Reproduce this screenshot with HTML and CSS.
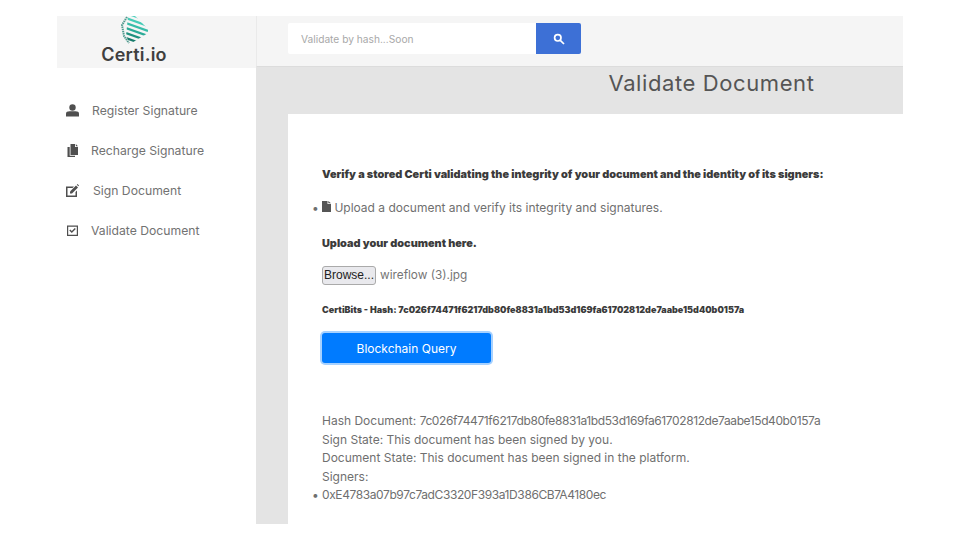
FILE: index.html
```html
<!DOCTYPE html>
<html lang="en">
<head>
<meta charset="UTF-8">
<title>Certi.io</title>
<link rel="stylesheet" href="styles.css">
</head>
<body>
<div class="app">
  <aside class="sidebar">
    <div class="brand">
      <svg class="brand-mark" width="28" height="29" viewBox="0 0 28 29">
        <defs><clipPath id="cube"><path d="M7 0H14L27 13V17L9 28 5 20z"/></clipPath></defs>
        <g clip-path="url(#cube)" fill="none" stroke-width="2.300">
          <path d="M5 -3L27 5" stroke="#52d2bf"/>
          <path d="M5 2L27 10" stroke="#45cbb7"/>
          <path d="M5 7L27 15" stroke="#37bca8"/>
          <path d="M5 12L27 20" stroke="#2baa97"/>
          <path d="M5 17L27 25" stroke="#20917f"/>
          <path d="M5 22L27 30" stroke="#187b6c"/>
        </g>
        <path d="M6 1L1 9 3 20 8 27" fill="none" stroke="#4f9a8e" stroke-width="2" stroke-dasharray="1.500 .7"/>
      </svg>
      <div class="brand-name">Certi.io</div>
    </div>
    <nav class="menu">
      <a class="menu-item"><svg class="ico" viewBox="0 0 13 13"><circle cx="6.500" cy="3.500" r="3.200"/><path d="M0 12.500V9.500C0 8 1.500 7.200 3.500 7.200h6C11.500 7.200 13 8 13 9.500v3z"/></svg><span class="lbl-register">Register Signature</span></a>
      <a class="menu-item"><svg class="ico" viewBox="0 0 13 13"><path d="M4.500 0H9v3h3v8H4.500z"/><path d="M9.800 0L12 2.200H9.800z"/><path d="M1.500 3h2.200v8.800H9V13H1.500z"/></svg><span class="lbl-recharge">Recharge Signature</span></a>
      <a class="menu-item"><svg class="ico" viewBox="0 0 13 13"><path d="M0 2.500h8L6.500 4H1.500v7.500h8V8L11 6.500V13H0z"/><path d="M4 7.500L10 1.500l2 2L6 9.500H4z"/><path d="M10.800.7L11.500 0 13 1.500l-.7.7z"/></svg><span class="lbl-sign">Sign Document</span></a>
      <a class="menu-item"><svg class="ico" viewBox="0 0 13 13"><path fill-rule="evenodd" d="M1 1.500h11v10.500H1zM2.200 2.700v8.100h8.600V2.700z"/><path d="M3.300 6.500l1-1 1.500 1.500 3-3 1 1-4 4z"/></svg><span class="lbl-validate">Validate Document</span></a>
    </nav>
  </aside>
  <div class="content">
    <header class="topbar">
      <div class="search">
        <input class="search-input" type="text" placeholder="Validate by hash...Soon">
        <button class="search-btn"><svg width="12" height="12" viewBox="0 0 12 12" fill="none" stroke="#fff" stroke-width="1.700"><circle cx="4.800" cy="4.800" r="3.200"/><path d="M7.300 7.300L11 11"/></svg></button>
      </div>
    </header>
    <div class="main">
      <h1 class="page-title">Validate Document</h1>
      <section class="card">
        <p class="lead">Verify a stored Certi validating the integrity of your document and the identity of its signers:</p>
        <ul class="steps">
          <li><svg class="file-ico" width="9" height="11" viewBox="0 0 9 11"><path d="M0 0h5.500v3H9v8H0z"/><path d="M6.300 0L9 2.300H6.300z"/></svg> Upload a document and verify its integrity and signatures.</li>
        </ul>
        <p class="upload-title">Upload your document here.</p>
        <div class="file-row"><button class="browse">Browse...</button><span class="file-name">wireflow (3).jpg</span></div>
        <p class="bits">CertiBits - Hash: 7c026f74471f6217db80fe8831a1bd53d169fa61702812de7aabe15d40b0157a</p>
        <button class="query-btn">Blockchain Query</button>
        <div class="result">
          <div>Hash Document: <span class="hex">7c026f74471f6217db80fe8831a1bd53d169fa61702812de7aabe15d40b0157a</span></div>
          <div>Sign State: This document has been signed by you.</div>
          <div>Document State: This document has been signed in the platform.</div>
          <div>Signers:</div>
          <ul class="steps signers"><li><span class="hex">0xE4783a07b97c7adC3320F393a1D386CB7A4180ec</span></li></ul>
        </div>
      </section>
    </div>
  </div>
</div>
</body>
</html>
```

FILE: styles.css
```css
html,body{height:100%;}
body{margin:0;padding:16px 57px;box-sizing:border-box;background:#fff;font-family:"Inter","Open Sans",Arial,sans-serif;color:#6f6f6f;overflow:hidden;}
.app{display:flex;height:508px;}

.sidebar{width:199px;flex:none;background:#fff;}
.brand{height:52px;background:#f5f5f5;display:flex;flex-direction:column;align-items:center;overflow:hidden;padding-right:45px;}
.brand-mark{display:block;flex:none;margin-bottom:-1px;margin-left:1px;}
.brand-name{font-size:18px;line-height:22px;font-weight:600;color:#3f3f3f;letter-spacing:0.2px;}
.menu{padding-top:22px;display:flex;flex-direction:column;}
.menu-item{height:40px;display:flex;align-items:center;padding-left:9px;font-size:12.200px;color:#727272;}
.ico{width:13px;height:13px;fill:#4f4f4f;flex:none;}
.lbl-register{margin-left:13px;}
.lbl-recharge{margin-left:12px;}
.lbl-sign{margin-left:14px;}
.lbl-validate{margin-left:12px;}

.content{flex:1;display:flex;flex-direction:column;min-width:0;}
.topbar{height:51px;flex:none;background:#f5f5f5;border-left:1px solid #eaeaea;border-bottom:1px solid #dcdcdc;padding:7px 0 0 31px;box-sizing:border-box;}
.search{display:flex;width:293px;height:31px;}
.search-input{flex:1;min-width:0;border:0;background:#fff;padding:0 13px;font:10.200px "Inter",Arial,sans-serif;outline:none;border-radius:2px 0 0 2px;}
.search-input::placeholder{color:#a8a8a8;opacity:1;}
.search-btn{width:45px;flex:none;border:0;background:#3d70d6;border-radius:0 2px 2px 0;padding:0;display:flex;align-items:center;justify-content:center;}

.main{flex:1;background:#e4e4e4;padding-left:32px;display:flex;flex-direction:column;min-height:0;}
.page-title{margin:0;height:47px;font-size:22px;line-height:32px;font-weight:400;color:#555;text-align:center;padding-left:232px;letter-spacing:0.6px;white-space:nowrap;}
.card{flex:1;background:#fff;padding:52px 34px 0;}
.lead{margin:0;font-size:10.900px;line-height:16px;font-weight:900;color:#3b3b3b;white-space:nowrap;}
.steps{margin:17px 0 0;padding:0;list-style:none;font-size:12px;line-height:18px;}
.steps li::before{content:"•";display:inline-block;width:10px;margin-left:-10px;}
.file-ico{fill:#555;}
.upload-title{margin:18px 0 0;font-size:10.900px;line-height:16px;font-weight:900;color:#3b3b3b;}
.file-row{margin-top:14px;display:flex;align-items:center;height:20px;}
.browse{width:54px;height:19px;padding:0;border:1px solid #aaa;border-radius:3px;background:#e9e9ed;font:12px "Liberation Sans",Arial,sans-serif;color:#222;}
.file-name{margin-left:4px;font-size:11.800px;color:#757575;}
.bits{margin:18px 0 0;font-size:9px;line-height:14px;font-weight:900;color:#3b3b3b;white-space:nowrap;}
.query-btn{display:block;margin-top:16px;width:169px;height:30px;border:0;border-radius:3px;background:#007bff;color:#fff;font:12px "Inter",Arial,sans-serif;box-shadow:0 0 0 2px rgba(0,123,255,0.35);}
.result{margin-top:49px;font-size:12px;line-height:18.500px;color:#6f6f6f;white-space:nowrap;}
.hex{letter-spacing:-0.4px;}
.signers{margin:0;font-size:12px;line-height:18.500px;}
```
